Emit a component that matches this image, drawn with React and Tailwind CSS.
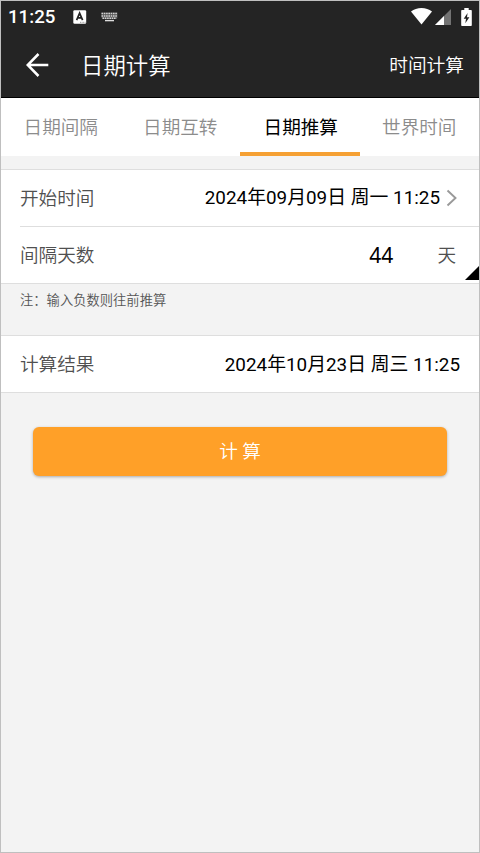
import React from "react";

function StatusBar() {
  return (
    <div className="flex h-[31px] items-center pl-[7px] pr-[7px]">
      <span className="pt-px text-[18.7px] leading-none font-medium">11:25</span>
      <svg className="ml-[18px]" width="14" height="14" viewBox="0 0 14 14">
        <rect x="0.3" y="0.3" width="12.9" height="13.4" rx="1.2" fill="#fff" />
        <path d="M3.6 10.2 6.6 3.2 9.6 10.2M4.8 7.9h3.8" fill="none" stroke="#222" strokeWidth="1.7" />
        <path d="M7 12.3h5.5" stroke="#777" strokeWidth="0.8" strokeDasharray="1 0.6" />
      </svg>
      <svg className="ml-[14px]" width="17" height="10" viewBox="0 0 17 10">
        <path d="M0.5 1.5h16M0.5 4h16M1.5 6.2h14" stroke="#ddd" strokeWidth="1.5" strokeDasharray="1.6 0.7" />
        <path d="M0.5 0.5h16v5.6l-2 1h-12l-2-1z" fill="#bbb" fillOpacity="0.3" />
        <path d="M4 8.6h9" stroke="#ddd" strokeWidth="1.4" />
      </svg>
      <svg className="ml-auto" width="21" height="17" viewBox="0 0 21 17">
        <path d="M10.5 16.6 0 3.6C2.9 1.2 6.5 0 10.5 0S18.100 1.200 21 3.600Z" fill="#fff" />
      </svg>
      <svg className="ml-[3px]" width="16" height="16" viewBox="0 0 16 16">
        <path d="M16 0v16H0z" fill="#737373" />
        <path d="M9 7v9H0z" fill="#fff" />
      </svg>
      <svg className="ml-[10px]" width="11" height="18" viewBox="0 0 11 18">
        <path d="M3.3 0h4.400v2H10q.8 0 .8.8V17.200q0 .8-.8.8H1q-.8 0-.8-.8V2.800Q.2 2 1 2h2.300z" fill="#fff" />
        <path d="M6.600 5 2.700 10.700h2.300L4.300 15.300 8.400 9.300H6z" fill="#222" />
      </svg>
    </div>
  );
}

const tabs = ["日期间隔", "日期互转", "日期推算", "世界时间"];

export default function App() {
  return (
    <div className="flex h-[853px] w-[480px] flex-col overflow-hidden border border-[#bfbfbf] bg-[#f3f3f3] font-['Roboto','Noto_Sans_CJK_SC',sans-serif] text-[18.6px] leading-none text-black">
      <header className="h-[97px] shrink-0 border-b border-black bg-[#242424] text-white">
        <StatusBar />
        <div className="flex h-[66px] items-center pr-[15px] pl-[25px]">
          <svg width="23" height="24" viewBox="0 0 23 24" fill="none" stroke="#fff" strokeWidth="2.5">
            <path d="M12.500 1 1.700 12l10.800 11M1.700 12H22.300" />
          </svg>
          <h1 className="ml-[32px] pt-[2px] text-[22.4px] leading-none font-[350]">日期计算</h1>
          <span className="ml-auto pt-[2px] text-[18.7px] font-[350]">时间计算</span>
        </div>
      </header>

      <nav className="grid h-[58px] shrink-0 grid-cols-4 bg-white">
        {tabs.map((t) => (
          <button
            key={t}
            className={
              t === "日期推算"
                ? "flex items-center justify-center border-b-4 border-[#f5a033] pt-[6px] pl-[2px] text-black"
                : "flex items-center justify-center border-b-4 border-white pt-[6px] font-[350] text-[#8c8c8c]"
            }
          >
            {t}
          </button>
        ))}
      </nav>

      <section className="mt-[13px] h-[115px] shrink-0 border-y border-[#dedede] bg-white">
        <div className="flex h-[56px] items-center pr-[22px] pl-[19px]">
          <span className="pt-[2px] font-[350] text-[#505050]">开始时间</span>
          <span className="ml-auto pt-px text-[18.85px]">2024年09月09日 周一 11:25</span>
          <svg className="ml-[6px]" width="11" height="18" viewBox="0 0 11 18" fill="none" stroke="#999" strokeWidth="1.9">
            <path d="M1.500 1.500 9.500 9l-8 7.500" />
          </svg>
        </div>
        <div className="ml-[19px] h-px bg-[#dedede]" />
        <div className="relative flex h-[56px] items-center pr-[23px] pl-[19px]">
          <span className="pt-[2px] font-[350] text-[#505050]">间隔天数</span>
          <span className="ml-auto font-['Noto_Sans',sans-serif] text-[21px]">44</span>
          <span className="ml-[44px] pt-[2px] font-[350] text-[#505050]">天</span>
          <svg className="absolute right-0 bottom-[3px]" width="14" height="14" viewBox="0 0 14 14">
            <path d="M14 0v14H0z" fill="#000" />
          </svg>
        </div>
      </section>

      <p className="h-[51px] shrink-0 pt-[10px] pl-[19px] text-[13.3px] leading-none font-[350] text-[#555]">注：输入负数则往前推算</p>

      <section className="flex h-[58px] shrink-0 items-center border-y border-[#dedede] bg-white pr-[19px] pl-[19px]">
        <span className="pt-[2px] font-[350] text-[#505050]">计算结果</span>
        <span className="ml-auto pt-[2px] text-[18.85px]">2024年10月23日 周三 11:25</span>
      </section>

      <button className="mx-[32px] mt-[34px] h-[49px] shrink-0 rounded-[6px] bg-[#ffa028] pt-[2px] text-[18.6px] leading-none font-[350] text-white shadow-[0_1px_3px_rgba(0,0,0,0.3)]">
        计 算
      </button>
    </div>
  );
}
